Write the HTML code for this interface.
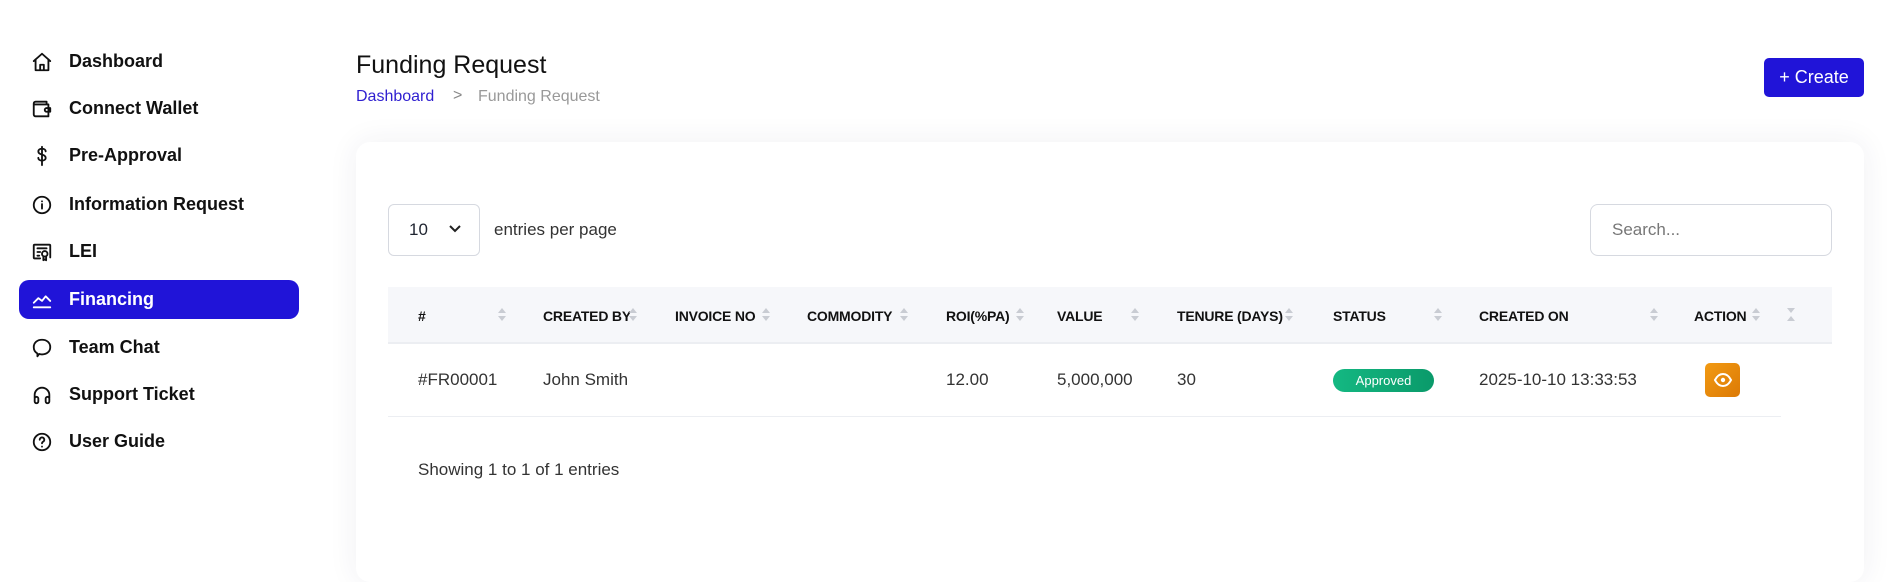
<!DOCTYPE html>
<html><head><meta charset="utf-8"><style>
*{box-sizing:border-box;margin:0;padding:0}
body{width:1900px;height:552px;overflow:hidden;background:#fff;font-family:"Liberation Sans",sans-serif;color:#1f2430;position:relative}
.nav{position:absolute;left:19px;width:280px;height:39px;border-radius:10px;display:flex;align-items:center;font-size:18px;font-weight:600;color:#111}
.nav svg{position:absolute;left:12px;width:22px;height:22px;fill:none;stroke:#111;stroke-width:2;stroke-linecap:round;stroke-linejoin:round}
.nav span{position:absolute;left:50px}
.nav.act{background:#2014d8;color:#fff}
.nav.act svg{stroke:#fff}
.abs{position:absolute}
.th{position:absolute;top:308px;font-size:14px;font-weight:bold;color:#111;letter-spacing:-0.2px}
.sort{position:absolute;top:307px;width:8px;height:16px}
.td{position:absolute;top:370px;font-size:17px;color:#333}
</style></head><body>
<div class="nav" style="top:42px"><svg viewBox="0 0 24 24"><path d="M3 11l9-8 9 8M5 9v12h14V9M10 21v-6h4v6"/></svg><span>Dashboard</span></div>
<div class="nav" style="top:89px"><svg viewBox="0 0 24 24"><path d="M17 7V4H5a2 2 0 0 0-2 2v12a2 2 0 0 0 2 2h14V7H4M21 11h-4a2 2 0 0 0 0 4h4z"/></svg><span>Connect Wallet</span></div>
<div class="nav" style="top:136px"><svg viewBox="0 0 24 24"><path d="M16 7c0-2-2-3-4-3s-4 1-4 3 2 3 4 3.5 4 1.5 4 3.5-2 3-4 3-4-1-4-3M12 2v20"/></svg><span>Pre-Approval</span></div>
<div class="nav" style="top:185px"><svg viewBox="0 0 24 24"><circle cx="12" cy="12" r="9"/><path d="M12 11v5M12 8h.01"/></svg><span>Information Request</span></div>
<div class="nav" style="top:232px"><svg viewBox="0 0 24 24"><path d="M10 19H4a1 1 0 0 1-1-1V5a1 1 0 0 1 1-1h16a1 1 0 0 1 1 1v13M7 8h10M7 12h3M7 16h2"/><circle cx="15" cy="14" r="3"/><path d="M13.5 17v4l1.5-1 1.5 1v-4"/></svg><span>LEI</span></div>
<div class="nav act" style="top:280px"><svg viewBox="0 0 24 24"><path d="M3 15l5-5 4 3 4-5 5 5M3 20h18"/></svg><span>Financing</span></div>
<div class="nav" style="top:328px"><svg viewBox="0 0 24 24"><path d="M12 3c5 0 9 3 9 8s-4 8-9 8c-1 0-2 0-3-.5L7 21v-3c-2.5-1.5-4-4-4-7 0-5 4-8 9-8z"/></svg><span>Team Chat</span></div>
<div class="nav" style="top:375px"><svg viewBox="0 0 24 24"><path d="M4 15v-3a8 8 0 0 1 16 0v3"/><rect x="4" y="14" width="4" height="7" rx="2"/><rect x="16" y="14" width="4" height="7" rx="2"/></svg><span>Support Ticket</span></div>
<div class="nav" style="top:422px"><svg viewBox="0 0 24 24"><circle cx="12" cy="12" r="9"/><path d="M9.5 9.5a2.5 2.5 0 1 1 3.5 2.3c-.7.4-1 1-1 1.7M12 17h.01"/></svg><span>User Guide</span></div>

<div class="abs" style="left:356px;top:51px;font-size:25px;color:#111">Funding Request</div>
<div class="abs" style="left:356px;top:88px;font-size:16px;color:#2f1fd0">Dashboard</div>
<div class="abs" style="left:453px;top:87px;font-size:16px;color:#888">&gt;</div>
<div class="abs" style="left:478px;top:88px;font-size:16px;color:#999">Funding Request</div>
<div class="abs" style="left:1764px;top:58px;width:100px;height:39px;background:#2014d8;border-radius:5px;color:#fff;font-size:18px;line-height:39px;text-align:center">+ Create</div>

<div class="abs" style="left:356px;top:142px;width:1508px;height:440px;background:#fff;border-radius:14px;box-shadow:0 0 30px rgba(40,40,90,.07)"></div>
<div class="abs" style="left:388px;top:204px;width:92px;height:52px;border:1px solid #d6d9e0;border-radius:6px;font-size:17px;padding:15px 0 0 20px">10</div>
<svg class="abs" style="left:448px;top:224px" width="14" height="10" viewBox="0 0 14 10"><path d="M2 2l5 5 5-5" fill="none" stroke="#222" stroke-width="2"/></svg>
<div class="abs" style="left:494px;top:220px;font-size:17px;color:#333">entries per page</div>
<div class="abs" style="left:1590px;top:204px;width:242px;height:52px;border:1px solid #d6d9e0;border-radius:8px;font-size:17px;color:#777;padding:15px 0 0 21px">Search...</div>

<div class="abs" style="left:388px;top:287px;width:1444px;height:57px;background:#f6f7fa;border-bottom:2px solid #eceef2"></div>
<div class="th" style="left:418px">#</div>
<div class="th" style="left:543px">CREATED BY</div>
<div class="th" style="left:675px">INVOICE NO</div>
<div class="th" style="left:807px">COMMODITY</div>
<div class="th" style="left:946px">ROI(%PA)</div>
<div class="th" style="left:1057px">VALUE</div>
<div class="th" style="left:1177px">TENURE (DAYS)</div>
<div class="th" style="left:1333px">STATUS</div>
<div class="th" style="left:1479px">CREATED ON</div>
<div class="th" style="left:1694px">ACTION</div>
<svg width="0" height="0"><defs><g id="ar"><path d="M0 6L4 1L8 6z" fill="#c9ccd3"/><path d="M0 9L4 14L8 9z" fill="#c9ccd3"/></g></defs></svg>
<svg class="sort" style="left:498px"><use href="#ar"/></svg>
<svg class="sort" style="left:629px"><use href="#ar"/></svg>
<svg class="sort" style="left:762px"><use href="#ar"/></svg>
<svg class="sort" style="left:900px"><use href="#ar"/></svg>
<svg class="sort" style="left:1016px"><use href="#ar"/></svg>
<svg class="sort" style="left:1131px"><use href="#ar"/></svg>
<svg class="sort" style="left:1285px"><use href="#ar"/></svg>
<svg class="sort" style="left:1434px"><use href="#ar"/></svg>
<svg class="sort" style="left:1650px"><use href="#ar"/></svg>
<svg class="sort" style="left:1752px"><use href="#ar"/></svg>
<svg class="sort" style="left:1787px"><path d="M0 1L8 1L4 6z" fill="#c9ccd3"/><path d="M0 14L4 9L8 14z" fill="#c9ccd3"/></svg>

<div class="abs" style="left:388px;top:416px;width:1393px;height:1px;background:#eceef2"></div>
<div class="td" style="left:418px">#FR00001</div>
<div class="td" style="left:543px">John Smith</div>
<div class="td" style="left:946px">12.00</div>
<div class="td" style="left:1057px">5,000,000</div>
<div class="td" style="left:1177px">30</div>
<div class="abs" style="left:1333px;top:369px;width:101px;height:23px;border-radius:12px;background:linear-gradient(90deg,#14b882,#0a9a6a);color:#fff;font-size:13px;line-height:23px;text-align:center">Approved</div>
<div class="td" style="left:1479px">2025-10-10 13:33:53</div>
<div class="abs" style="left:1705px;top:363px;width:35px;height:34px;border-radius:5px;background:linear-gradient(135deg,#f29a12,#dc7a06)"></div>
<svg class="abs" style="left:1713px;top:370px" width="20" height="20" viewBox="0 0 20 20"><path d="M2 10c2-4 5-6 8-6s6 2 8 6c-2 4-5 6-8 6s-6-2-8-6z" fill="none" stroke="#fff" stroke-width="2"/><circle cx="10" cy="10" r="2.2" fill="#fff"/></svg>
<div class="abs" style="left:418px;top:460px;font-size:17px;color:#333">Showing 1 to 1 of 1 entries</div>
</body></html>
